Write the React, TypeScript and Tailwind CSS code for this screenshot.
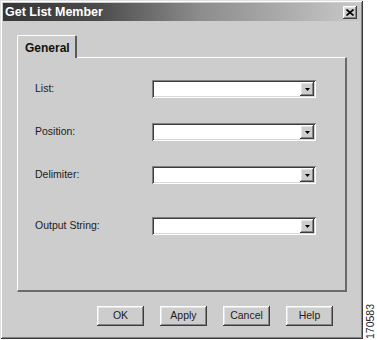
import React from 'react';

const raised =
  'shadow-[inset_-1px_-1px_0_#3c3c3c,inset_1px_1px_0_#ffffff,inset_-2px_-2px_0_#858585,inset_2px_2px_0_#e4e4e4]';
const sunken =
  'shadow-[inset_1px_1px_0_#808080,inset_-1px_-1px_0_#ffffff,inset_2px_2px_0_#3c3c3c,inset_-2px_-2px_0_#d8d8d8]';

interface FieldProps {
  label: string;
  top: string;
}

const ComboRow: React.FC<FieldProps> = ({ label, top }) => (
  <div className={`flex items-center h-[18px] ${top}`}>
    <span className="w-[117px] text-[10.5px] text-[#1c1c1c]">{label}</span>
    <div className={`w-[164px] h-[18px] bg-white flex justify-end items-center pr-[2px] ${sunken}`}>
      <div className={`w-[14px] h-[14px] bg-[#cdcdcd] flex items-center justify-center ${raised}`}>
        <svg width="5" height="3" viewBox="0 0 5 3">
          <path d="M0 0h5L2.5 3z" fill="#000" />
        </svg>
      </div>
    </div>
  </div>
);

const DlgButton: React.FC<{ text: string }> = ({ text }) => (
  <button className={`w-[47px] h-[20px] bg-[#cdcdcd] text-[10.5px] text-[#1c1c1c] flex items-center justify-center ${raised}`}>
    {text}
  </button>
);

export default function App() {
  return (
    <div className="flex w-[377px] h-[340px] bg-white font-['Liberation_Sans',Arial,sans-serif]">
      <div className="w-[363px] h-[339px] bg-[#cdcdcd] flex flex-col shadow-[inset_1px_1px_0_#e0e0e0,inset_-1px_-1px_0_#3a3a3a,inset_2px_2px_0_#ffffff,inset_-2px_-2px_0_#858585]">
        {/* title bar */}
        <div className="mx-[3px] mt-[3px] h-[18px] flex items-center justify-between pl-[2px] pr-[3px] bg-[linear-gradient(90deg,#363636_0%,#4a4a4a_26%,#8c8c8c_55%,#c8c8c8_100%)]">
          <span className="text-white font-bold text-[12.5px] leading-none">Get List Member</span>
          <div className={`w-[14px] h-[13px] bg-[#cdcdcd] flex items-center justify-center ${raised}`}>
            <svg width="8" height="7" viewBox="0 0 8 7">
              <path d="M0.5 0.5L7.5 6.5M7.5 0.5L0.5 6.5" stroke="#000" strokeWidth="1.6" />
            </svg>
          </div>
        </div>

        {/* tab */}
        <div className="ml-[17px] mt-[14px] flex">
          <div className="w-[60px] h-[23px] pl-[7px] pt-[3px] border-l border-t border-white border-r-2 border-r-[#5a5a5a] rounded-tl-[2px] rounded-tr-[2px] text-[12px] font-bold text-[#111] -mb-px relative bg-[#cdcdcd]">
            General
          </div>
        </div>

        {/* panel */}
        <div className="ml-[17px] w-[330px] h-[235px] border-t border-l border-white border-r-2 border-b-2 border-r-[#6a6a6a] border-b-[#6a6a6a] pl-[17px] pt-[22px] flex flex-col">
          <ComboRow label="List:" top="" />
          <ComboRow label="Position:" top="mt-[25px]" />
          <ComboRow label="Delimiter:" top="mt-[25px]" />
          <ComboRow label="Output String:" top="mt-[33px]" />
        </div>

        {/* buttons */}
        <div className="ml-[97px] mt-[14px] flex gap-[16px]">
          <DlgButton text="OK" />
          <DlgButton text="Apply" />
          <DlgButton text="Cancel" />
          <DlgButton text="Help" />
        </div>
      </div>

      <div className="w-[14px] flex flex-col justify-end items-center pb-[1px]">
        <span className="[writing-mode:vertical-rl] rotate-180 text-[10.5px] leading-none text-[#222]">170583</span>
      </div>
    </div>
  );
}
